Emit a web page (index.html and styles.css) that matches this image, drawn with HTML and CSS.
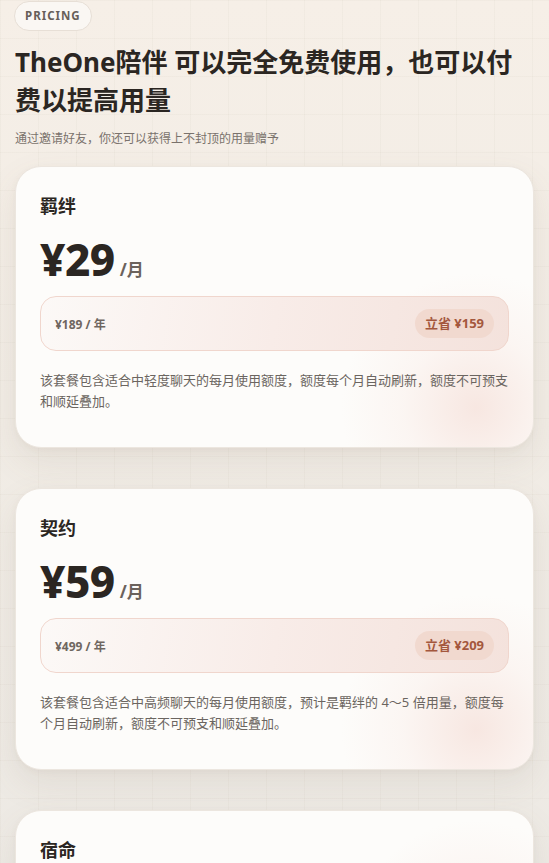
FILE: index.html
```html
<!DOCTYPE html>
<html lang="zh-CN">
<head>
<meta charset="utf-8">
<title>Pricing</title>
<link rel="stylesheet" href="styles.css">
</head>
<body>
<main class="page">
  <header class="intro">
    <span class="badge">PRICING</span>
    <h1 class="headline">TheOne陪伴 可以完全免费使用，也可以付费以提高用量</h1>
    <p class="sub">通过邀请好友，你还可以获得上不封顶的用量赠予</p>
  </header>

  <section class="plans">
    <article class="card">
      <h2 class="plan-name">羁绊</h2>
      <div class="price"><span class="amount">¥29</span><span class="unit">/月</span></div>
      <div class="yearly">
        <span class="yearly-price">¥189 / 年</span>
        <span class="save">立省 ¥159</span>
      </div>
      <p class="desc">该套餐包含适合中轻度聊天的每月使用额度，额度每个月自动刷新，额度不可预支和顺延叠加。</p>
    </article>

    <article class="card">
      <h2 class="plan-name">契约</h2>
      <div class="price"><span class="amount">¥59</span><span class="unit">/月</span></div>
      <div class="yearly">
        <span class="yearly-price">¥499 / 年</span>
        <span class="save">立省 ¥209</span>
      </div>
      <p class="desc">该套餐包含适合中高频聊天的每月使用额度，预计是羁绊的 4～5 倍用量，额度每个月自动刷新，额度不可预支和顺延叠加。</p>
    </article>

    <article class="card">
      <h2 class="plan-name">宿命</h2>
      <div class="price"><span class="amount">¥99</span><span class="unit">/月</span></div>
    </article>
  </section>
</main>
</body>
</html>
```

FILE: styles.css
```css
* { box-sizing: border-box; }

html, body { margin: 0; padding: 0; }

body {
  font-family: "Noto Sans", "Noto Sans CJK SC", sans-serif;
  color: #2b2622;
  background-color: #efebe5;
  background-image:
    linear-gradient(rgba(120, 100, 80, 0.035) 1px, transparent 1px),
    linear-gradient(90deg, rgba(120, 100, 80, 0.035) 1px, transparent 1px),
    linear-gradient(180deg, #f6efe7 0%, #f1ece5 40%, #ece9e4 100%);
  background-size: 38px 38px, 38px 38px, 100% 100%;
  min-height: 863px;
}

.page {
  padding: 1px 15px 40px 15px;
}

.intro {
  display: flex;
  flex-direction: column;
  align-items: flex-start;
}

.badge {
  display: inline-block;
  height: 30px;
  line-height: 28px;
  padding: 0 10px;
  border: 1px solid #e7dfd6;
  border-radius: 15px;
  background: #faf7f3;
  font-size: 11.5px;
  font-weight: 700;
  letter-spacing: 1px;
  color: #675f59;
  margin-left: -1px;
}

.headline {
  margin: 12px 0 0 0;
  font-size: 26px;
  line-height: 38px;
  font-weight: 700;
  color: #2b2622;
  letter-spacing: 0;
}

.sub {
  margin: 11px 0 0 0;
  font-size: 12px;
  line-height: 18px;
  color: #7a726c;
}

.plans {
  margin-top: 18px;
  display: flex;
  flex-direction: column;
  gap: 40px;
}

.card {
  position: relative;
  background-color: #fdfcfa;
  background-image: radial-gradient(circle at 89% 86%, rgba(240, 205, 195, 0.45) 0%, rgba(245, 220, 212, 0.2) 14%, rgba(255, 255, 255, 0) 26%);
  border: 1px solid #ece6df;
  border-radius: 26px;
  padding: 26px 24px 35px 24px;
  box-shadow: 0 14px 34px rgba(120, 100, 80, 0.10), 0 2px 6px rgba(120, 100, 80, 0.05);
  overflow: hidden;
}

.plan-name {
  margin: 0;
  font-size: 18px;
  line-height: 26px;
  font-weight: 700;
  color: #2b2622;
}

.price {
  display: flex;
  align-items: baseline;
  gap: 5px;
  margin-top: 12px;
}

.amount {
  font-size: 44px;
  line-height: 56px;
  font-weight: 800;
  color: #2b2622;
  letter-spacing: -0.5px;
}

.unit {
  font-size: 17px;
  font-weight: 700;
  color: #6b625c;
}

.yearly {
  margin-top: 9px;
  height: 55px;
  display: flex;
  align-items: center;
  justify-content: space-between;
  padding: 0 14px 0 14px;
  border: 1px solid #f0d6cd;
  border-radius: 16px;
  background: linear-gradient(100deg, #fcf9f7 0%, #f8ece8 50%, #f4e2dc 100%);
}

.yearly-price {
  font-size: 12px;
  font-weight: 700;
  color: #6f6660;
}

.save {
  height: 29px;
  line-height: 29px;
  padding: 0 10px;
  border-radius: 15px;
  background: #f1d9cf;
  font-size: 13px;
  font-weight: 700;
  color: #a4573d;
}

.desc {
  margin: 19px 0 0 0;
  font-size: 13px;
  line-height: 21px;
  color: #6b6560;
}
```
